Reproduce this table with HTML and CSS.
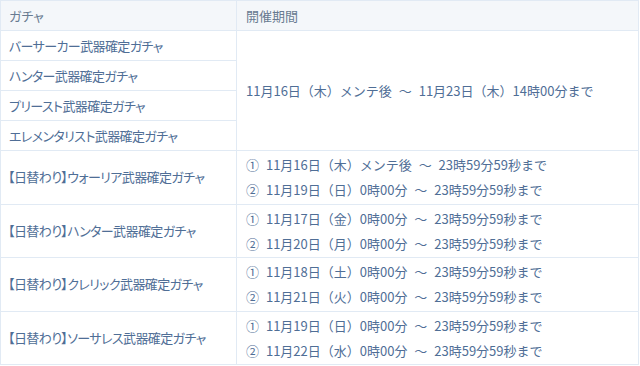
FILE: index.html
```html
<!DOCTYPE html>
<html lang="ja">
<head>
<meta charset="utf-8">
<link rel="stylesheet" href="styles.css">
</head>
<body>
<table class="gacha">
  <thead>
    <tr><th class="c1">ガチャ</th><th class="c2">開催期間</th></tr>
  </thead>
  <tbody>
    <tr class="short"><td class="name">バーサーカー武器確定ガチャ</td><td class="period" rowspan="4">11月16日（木）メンテ後 ～ 11月23日（木）14時00分まで</td></tr>
    <tr class="short"><td class="name">ハンター武器確定ガチャ</td></tr>
    <tr class="short"><td class="name">プリースト武器確定ガチャ</td></tr>
    <tr class="short"><td class="name">エレメンタリスト武器確定ガチャ</td></tr>
    <tr class="tall"><td class="name daily">【日替わり】ウォーリア武器確定ガチャ</td><td class="period"><div class="ln">① 11月16日（木）メンテ後 ～ 23時59分59秒まで</div><div class="ln">② 11月19日（日）0時00分 ～ 23時59分59秒まで</div></td></tr>
    <tr class="tall"><td class="name daily">【日替わり】ハンター武器確定ガチャ</td><td class="period"><div class="ln">① 11月17日（金）0時00分 ～ 23時59分59秒まで</div><div class="ln">② 11月20日（月）0時00分 ～ 23時59分59秒まで</div></td></tr>
    <tr class="tall"><td class="name daily">【日替わり】クレリック武器確定ガチャ</td><td class="period"><div class="ln">① 11月18日（土）0時00分 ～ 23時59分59秒まで</div><div class="ln">② 11月21日（火）0時00分 ～ 23時59分59秒まで</div></td></tr>
    <tr class="tall"><td class="name daily">【日替わり】ソーサレス武器確定ガチャ</td><td class="period"><div class="ln">① 11月19日（日）0時00分 ～ 23時59分59秒まで</div><div class="ln">② 11月22日（水）0時00分 ～ 23時59分59秒まで</div></td></tr>
  </tbody>
</table>
</body>
</html>
```

FILE: styles.css
```css
html, body {
  margin: 0;
  padding: 0;
  background: #ffffff;
}
body {
  font-family: "Noto Sans CJK JP", "Noto Sans", sans-serif;
  font-size: 13px;
  color: #4f6e96;
}
.gacha {
  width: 639px;
  border-collapse: collapse;
  table-layout: fixed;
  border-top: 1px solid #b3c5da;
  border-left: 1px solid #c4d2e2;
  border-right: 1px solid #c9d2dc;
  border-bottom: 1px solid #bcc7d3;
}
.gacha th, .gacha td {
  border: 1px solid #e1eaf4;
  text-align: left;
  vertical-align: middle;
  padding: 0 8px;
  font-weight: normal;
  line-height: 20px;
  box-sizing: border-box;
}
.gacha th {
  background: #f4f7fa;
  color: #687b91;
  height: 30px;
  font-feature-settings: "palt";
}
.gacha .c1 { width: 236px; }
.gacha .c2 { padding-left: 9px; }
.gacha .name {
  font-feature-settings: "palt";
  letter-spacing: -0.6px;
}
.gacha .daily { padding-left: 7px; }
.gacha .period { padding-left: 9px; word-spacing: 4px; }
.gacha tr.short td { height: 30px; }
.gacha tr.tall td { height: 53.5px; }
.ln { line-height: 25px; }
```
